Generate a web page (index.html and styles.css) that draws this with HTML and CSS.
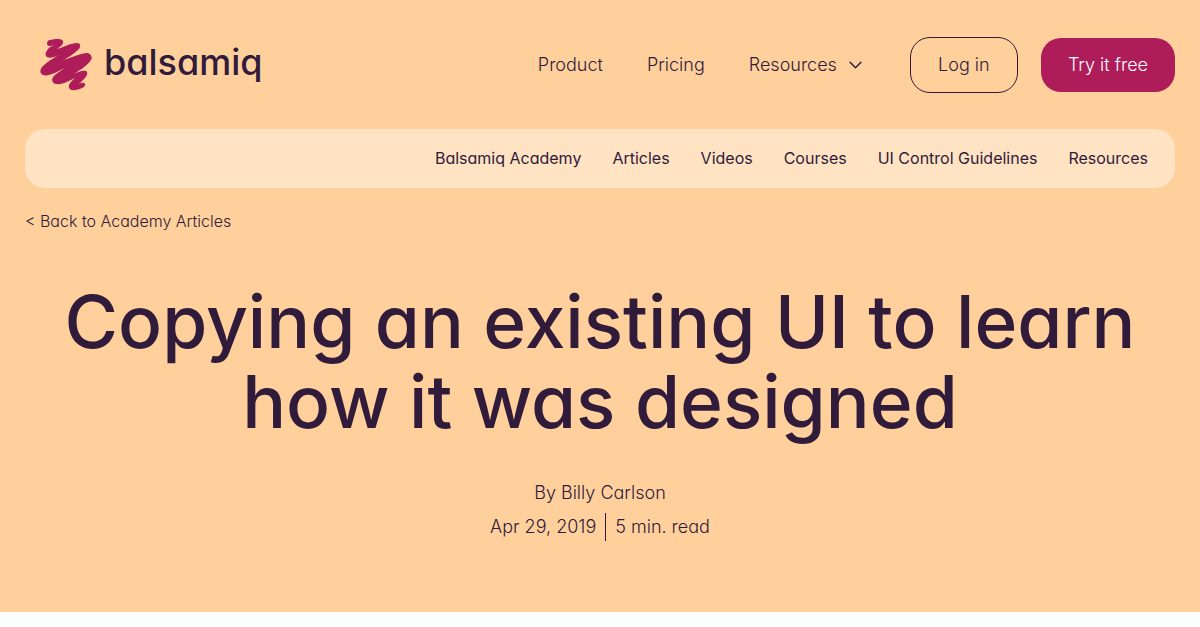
FILE: index.html
```html
<!DOCTYPE html>
<html lang="en">
<head>
<meta charset="utf-8">
<meta name="viewport" content="width=device-width, initial-scale=1">
<title>Copying an existing UI to learn how it was designed</title>
<link rel="stylesheet" href="styles.css">
</head>
<body>
<div class="hero">
  <header class="header">
    <a class="logo" href="#">
      <svg class="logo-mark" viewBox="0 0 52 52" aria-hidden="true">
        <path d="M10 1C15 0 21-1 23 2C24 5 20 8 17 10C24 8 31 4 37 4C41 4 41 8 38 11C34 15 28 18 24 21C32 18 40 15 46 14C50 14 53 17 51 21C48 26 40 31 34 35C38 33 43 31 46 32C49 34 46 38 43 41C41 43 40 44 39 45C41 44 44 43 45 45C46 48 41 50 36 51C31 52 28 50 29 46C30 43 33 41 35 39C29 42 22 46 16 45C11 44 11 39 15 36C18 33 22 31 25 29C18 32 9 38 3 36C-1 34 0 30 3 27C8 22 17 17 23 14C17 17 11 20 7 18C4 16 6 12 9 9C11 7 13 7 14 6C11 7 8 8 7 5C7 3 8 1 10 1Z" fill="currentColor"/>
      </svg>
      <span class="logo-name">balsamiq</span>
    </a>
    <nav class="main-nav" aria-label="Main">
      <a href="#">Product</a>
      <a href="#">Pricing</a>
      <button class="menu-button" type="button" aria-haspopup="true">Resources
        <svg class="chevron" viewBox="0 0 12 8" aria-hidden="true"><path d="M1 1L6 6L11 1" fill="none" stroke="currentColor" stroke-width="1.4" stroke-linecap="round"/></svg>
      </button>
    </nav>
    <div class="actions">
      <a class="button button-outline" href="#">Log in</a>
      <a class="button button-solid" href="#">Try it free</a>
    </div>
  </header>
  <nav class="sub-nav" aria-label="Academy">
    <a href="#">Balsamiq Academy</a>
    <a href="#">Articles</a>
    <a href="#">Videos</a>
    <a href="#">Courses</a>
    <a href="#">UI Control Guidelines</a>
    <a href="#">Resources</a>
  </nav>
  <a class="back-link" href="#">&lt; Back to Academy Articles</a>
  <main class="intro">
    <h1 class="title">Copying an existing UI to learn how it was designed</h1>
    <p class="byline">By Billy Carlson</p>
    <p class="meta"><time datetime="2019-04-29">Apr 29, 2019</time><span class="read-time">5 min. read</span></p>
  </main>
</div>
</body>
</html>
```

FILE: styles.css
```css
:root {
  --ink: #311b3b;
  --brand: #ae1c5a;
  --peach: #ffd09c;
  --cream: #ffe3c3;
}

* { box-sizing: border-box; }

body {
  margin: 0;
  background: #fff;
  color: var(--ink);
  font-family: Inter, "Open Sans", sans-serif;
  font-feature-settings: "cv11";
  font-size: 18px;
  font-weight: 300;
  line-height: 28px;
}

a { color: inherit; text-decoration: none; }

.hero {
  background: var(--peach);
  padding: 37px 25px 71px;
}

.header {
  display: flex;
  align-items: center;
}

.logo {
  display: flex;
  align-items: center;
  gap: 12px;
  margin: 0 auto 0 15px;
}

.logo-mark {
  width: 52px;
  height: 52px;
  color: var(--brand);
}

.logo-name {
  padding-bottom: 6px;
  font-size: 36px;
  font-weight: 500;
  line-height: 44px;
}

.main-nav {
  display: flex;
  gap: 44px;
  margin-right: 48px;
}

.menu-button {
  display: flex;
  align-items: center;
  gap: 12px;
  padding: 0;
  border: 0;
  background: none;
  color: inherit;
  font: inherit;
  font-feature-settings: inherit;
}

.chevron { width: 13px; height: 9px; }

.actions {
  display: flex;
  align-items: center;
  gap: 23px;
}

.button {
  padding: 13px 27px;
  border-radius: 20px;
  text-align: center;
}

.button-outline {
  min-width: 108px;
  border: 1px solid var(--ink);
}

.button-solid {
  min-width: 134px;
  background: var(--brand);
  color: #fff;
}

.sub-nav {
  display: flex;
  justify-content: flex-end;
  gap: 31px;
  margin-top: 36px;
  padding: 15px 27px 16px;
  border-radius: 20px;
  background: var(--cream);
  font-size: 16px;
  font-weight: 400;
}

.back-link {
  display: inline-block;
  margin-top: 19px;
  font-size: 16px;
}

.intro { text-align: center; }

.title {
  margin: 47px 0 37px;
  font-size: 73px;
  font-weight: 500;
  line-height: 80px;
}

.byline { margin: 0 0 6px; }

.meta {
  display: flex;
  justify-content: center;
  margin: 0;
}

.read-time {
  margin-left: 9px;
  padding-left: 9px;
  border-left: 1px solid var(--ink);
}
```
